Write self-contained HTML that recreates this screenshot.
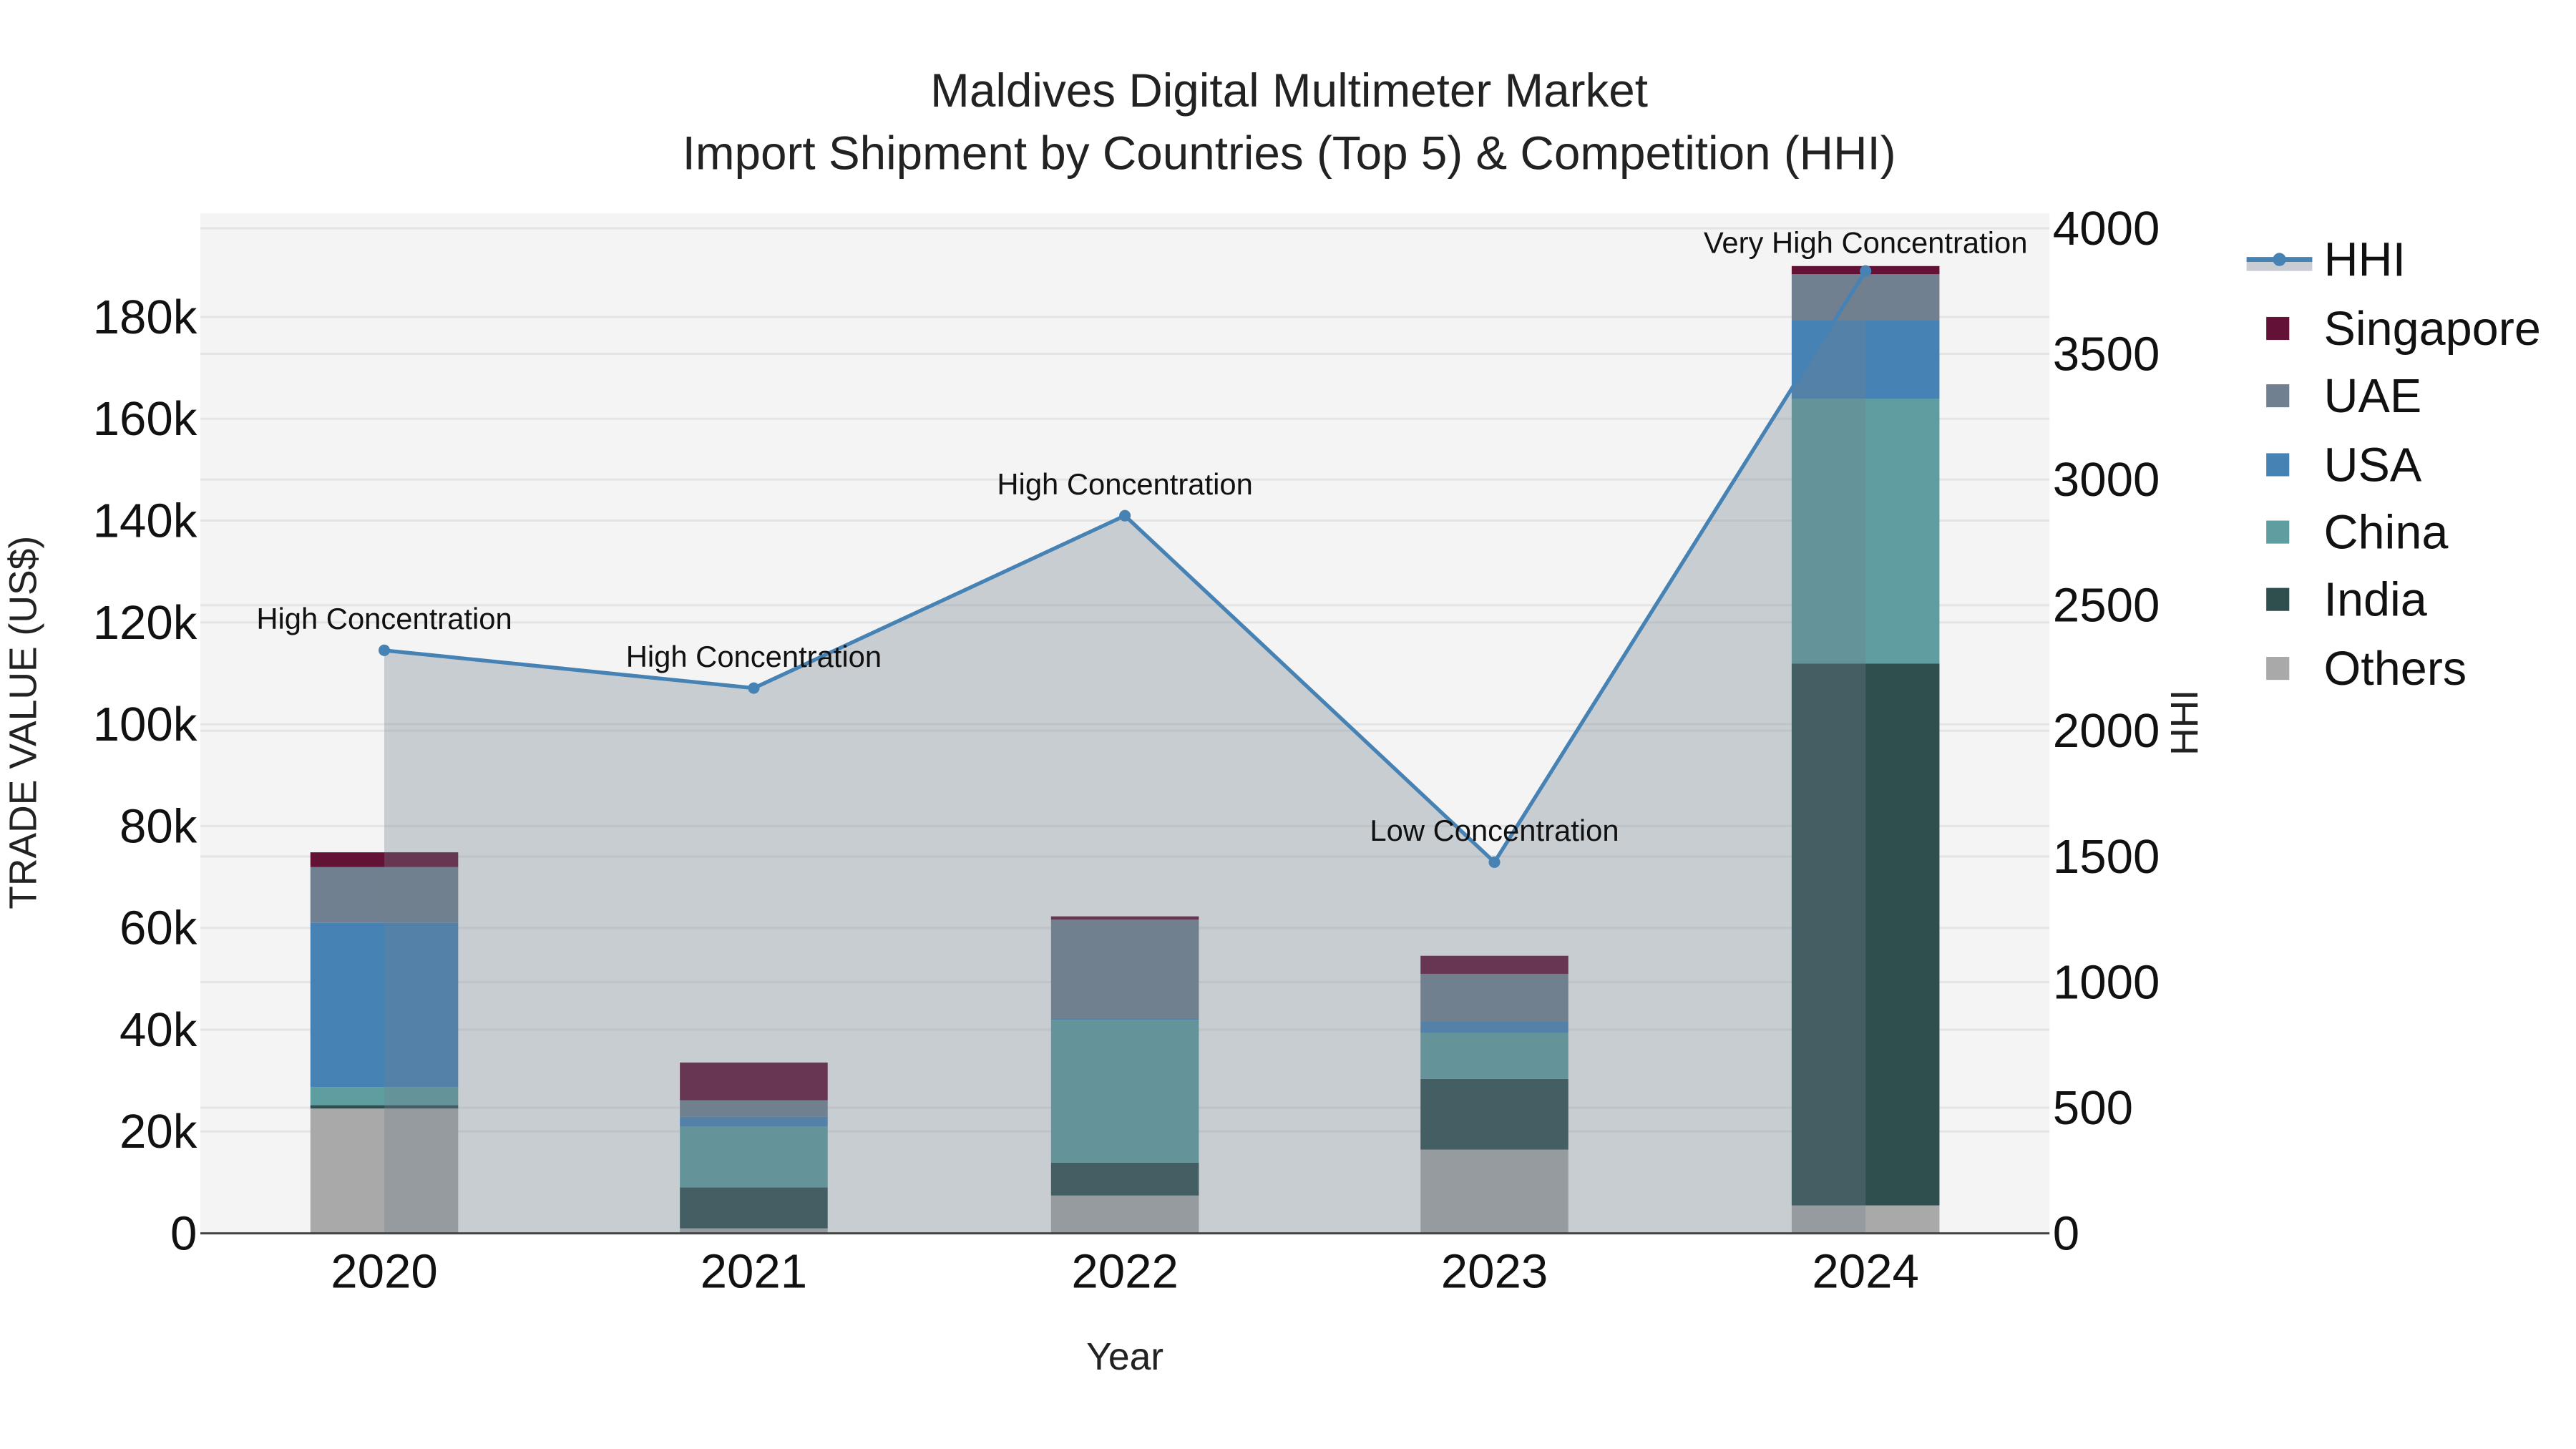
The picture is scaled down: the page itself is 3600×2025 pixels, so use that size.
<!DOCTYPE html>
<html><head><meta charset="utf-8"><style>html,body{margin:0;padding:0;background:#fff}svg{display:block}</style></head>
<body>
<svg width="3600" height="2025" viewBox="0 0 1568.6 882.3" preserveAspectRatio="xMinYMin meet" xmlns="http://www.w3.org/2000/svg" font-family="Liberation Sans, sans-serif">
<rect x="0" y="0" width="1568.6" height="882.3" fill="#fff"/>
<rect x="122" y="130" width="1126" height="621" fill="#f4f4f4"/>
<g stroke="#e4e4e4" stroke-width="1.3">
<line x1="122" x2="1248" y1="689" y2="689"/><line x1="122" x2="1248" y1="627" y2="627"/><line x1="122" x2="1248" y1="565" y2="565"/><line x1="122" x2="1248" y1="503" y2="503"/><line x1="122" x2="1248" y1="441" y2="441"/><line x1="122" x2="1248" y1="379" y2="379"/><line x1="122" x2="1248" y1="317" y2="317"/><line x1="122" x2="1248" y1="255" y2="255"/><line x1="122" x2="1248" y1="193" y2="193"/>
<line x1="122" x2="1248" y1="674.5" y2="674.5"/><line x1="122" x2="1248" y1="598" y2="598"/><line x1="122" x2="1248" y1="521.5" y2="521.5"/><line x1="122" x2="1248" y1="445" y2="445"/><line x1="122" x2="1248" y1="368.5" y2="368.5"/><line x1="122" x2="1248" y1="292" y2="292"/><line x1="122" x2="1248" y1="215.5" y2="215.5"/><line x1="122" x2="1248" y1="139" y2="139"/>
</g>
<g>
<rect x="189" y="675" width="90" height="76" fill="#a9a9a9"/><rect x="189" y="673" width="90" height="2" fill="#2f4f4f"/><rect x="189" y="662" width="90" height="11" fill="#5f9ea0"/><rect x="189" y="562" width="90" height="100" fill="#4682b4"/><rect x="189" y="528" width="90" height="34" fill="#708090"/><rect x="189" y="519" width="90" height="9" fill="#631236"/>
<rect x="414" y="748" width="90" height="3" fill="#a9a9a9"/><rect x="414" y="723" width="90" height="25" fill="#2f4f4f"/><rect x="414" y="686" width="90" height="37" fill="#5f9ea0"/><rect x="414" y="680" width="90" height="6" fill="#4682b4"/><rect x="414" y="670" width="90" height="10" fill="#708090"/><rect x="414" y="647" width="90" height="23" fill="#631236"/>
<rect x="640" y="728" width="90" height="23" fill="#a9a9a9"/><rect x="640" y="708" width="90" height="20" fill="#2f4f4f"/><rect x="640" y="621" width="90" height="87" fill="#5f9ea0"/><rect x="640" y="620" width="90" height="1" fill="#4682b4"/><rect x="640" y="560" width="90" height="60" fill="#708090"/><rect x="640" y="558" width="90" height="2" fill="#631236"/>
<rect x="865" y="700" width="90" height="51" fill="#a9a9a9"/><rect x="865" y="657" width="90" height="43" fill="#2f4f4f"/><rect x="865" y="629" width="90" height="28" fill="#5f9ea0"/><rect x="865" y="622" width="90" height="7" fill="#4682b4"/><rect x="865" y="593" width="90" height="29" fill="#708090"/><rect x="865" y="582" width="90" height="11" fill="#631236"/>
<rect x="1091" y="734" width="90" height="17" fill="#a9a9a9"/><rect x="1091" y="404" width="90" height="330" fill="#2f4f4f"/><rect x="1091" y="243" width="90" height="161" fill="#5f9ea0"/><rect x="1091" y="195" width="90" height="48" fill="#4682b4"/><rect x="1091" y="167" width="90" height="28" fill="#708090"/><rect x="1091" y="162" width="90" height="5" fill="#631236"/>
</g>
<polygon points="234,751 234,396 459,419 685,314 910,525 1136,165 1136,751" fill="rgba(112,128,144,0.33)"/>
<line x1="122" x2="1248" y1="751" y2="751" stroke="#444" stroke-width="1.3"/>
<polyline points="234,396 459,419 685,314 910,525 1136,165" fill="none" stroke="#4682b4" stroke-width="2.3"/>
<g fill="#4682b4"><circle cx="234" cy="396" r="3.5"/><circle cx="459" cy="419" r="3.5"/><circle cx="685" cy="314" r="3.5"/><circle cx="910" cy="525" r="3.5"/><circle cx="1136" cy="165" r="3.5"/></g>
<g font-size="18.2" fill="#111" text-anchor="middle">
<text x="234" y="383">High Concentration</text><text x="459" y="406">High Concentration</text><text x="685" y="301">High Concentration</text><text x="910" y="512">Low Concentration</text><text x="1136" y="154">Very High Concentration</text>
</g>
<g font-size="29.3" fill="#111" text-anchor="end">
<text x="120" y="761">0</text><text x="120" y="699">20k</text><text x="120" y="637">40k</text><text x="120" y="575">60k</text><text x="120" y="513">80k</text><text x="120" y="451">100k</text><text x="120" y="389">120k</text><text x="120" y="327">140k</text><text x="120" y="265">160k</text><text x="120" y="203">180k</text>
</g>
<g font-size="29.3" fill="#111" text-anchor="start">
<text x="1250" y="761">0</text><text x="1250" y="684.5">500</text><text x="1250" y="608">1000</text><text x="1250" y="531.5">1500</text><text x="1250" y="455">2000</text><text x="1250" y="378.5">2500</text><text x="1250" y="302">3000</text><text x="1250" y="225.5">3500</text><text x="1250" y="149">4000</text>
</g>
<g font-size="29.3" fill="#111" text-anchor="middle">
<text x="234" y="784">2020</text><text x="459" y="784">2021</text><text x="685" y="784">2022</text><text x="910" y="784">2023</text><text x="1136" y="784">2024</text>
</g>
<text x="685" y="834" font-size="23.3" fill="#222" text-anchor="middle">Year</text>
<text transform="translate(22,440) rotate(-90)" font-size="23.3" fill="#222" text-anchor="middle">TRADE VALUE (US$)</text>
<text transform="translate(1338,440) rotate(-90)" font-size="23.3" fill="#222" text-anchor="middle">HHI</text>
<g font-size="28.6" fill="#222" text-anchor="middle">
<text x="785" y="65">Maldives Digital Multimeter Market</text>
<text x="785" y="103">Import Shipment by Countries (Top 5) &amp; Competition (HHI)</text>
</g>
<rect x="1368" y="158" width="40" height="7" fill="#c9cdd3"/>
<line x1="1368" x2="1408" y1="158" y2="158" stroke="#4682b4" stroke-width="3"/>
<circle cx="1388" cy="158" r="4" fill="#4682b4"/>
<rect x="1380" y="193" width="14" height="14" fill="#631236"/>
<rect x="1380" y="234" width="14" height="14" fill="#708090"/>
<rect x="1380" y="276" width="14" height="14" fill="#4682b4"/>
<rect x="1380" y="317" width="14" height="14" fill="#5f9ea0"/>
<rect x="1380" y="358" width="14" height="14" fill="#2f4f4f"/>
<rect x="1380" y="400" width="14" height="14" fill="#a9a9a9"/>
<g font-size="29" fill="#111">
<text x="1415" y="168">HHI</text><text x="1415" y="210">Singapore</text><text x="1415" y="251">UAE</text><text x="1415" y="293">USA</text><text x="1415" y="334">China</text><text x="1415" y="375">India</text><text x="1415" y="417">Others</text>
</g>
</svg>
</body></html>
